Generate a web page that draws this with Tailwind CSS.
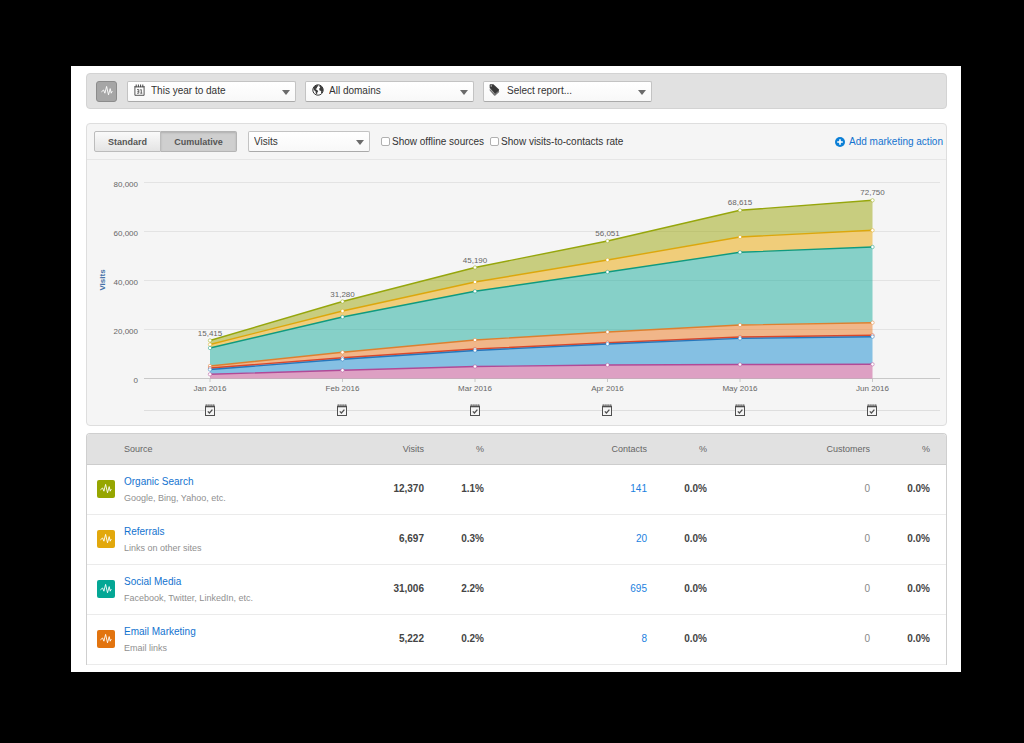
<!DOCTYPE html>
<html lang="en">
<head>
<meta charset="utf-8">
<meta name="viewport" content="width=device-width, initial-scale=1">
<title>Sources report</title>
<script src="https://cdn.jsdelivr.net/npm/@tailwindcss/browser@4"></script>
</head>
<body class="bg-black min-h-screen pt-[66px] pb-[71px] pl-[71px] pr-[63px] font-['Liberation_Sans',Arial,sans-serif] text-[10px] leading-4 text-[#333]">

<svg class="hidden" aria-hidden="true">
  <symbol id="pulse" viewBox="0 0 18 18">
    <path d="M3.7 9.6 5.6 8l1.3 3.2L8.6 4.4l1.9 8.4 1.7-6.2 1 4.6.9-1.8" fill="none" stroke="#fff" stroke-width=".9" stroke-linejoin="round" stroke-linecap="round"/>
  </symbol>
  <symbol id="arrow" viewBox="0 0 8 5"><path d="M0 0h8L4 5z" fill="#6b6b6b"/></symbol>
</svg>

<main class="bg-white px-[15px] pt-[7px] pb-[7px] pr-[14px]">
  <section aria-label="Filters" class="flex items-center rounded border border-[#d3d3d3] bg-[#e1e1e1] h-9 pl-[9px]">
    <button type="button" aria-label="Sources" class="size-[21px] shrink-0 rounded-[3px] border border-[#8c8c8c] bg-[#a6a6a6] flex items-center justify-center">
      <svg class="size-[18px]"><use href="#pulse"/></svg>
    </button>
    <div class="flex gap-[9px] ml-[10px]">
      <div class="relative w-[169px]">
        <select aria-label="Date range" class="appearance-none block w-full h-[21px] pl-[23px] rounded-[2px] border border-[#c3c3c3] border-b-[#aaa] bg-linear-to-b from-white to-[#f8f8f8]"><option>This year to date</option></select>
        <svg class="absolute left-[7px] top-[3px] w-[11px] h-3 pointer-events-none" viewBox="0 0 11 12" fill="none" stroke="#444">
          <path d="M.9 2v9.3h9.2V2" stroke-width=".9"/><path d="M.8 2.9h9.4" stroke-width=".9"/><path d="M2.2.5v2.6M4.4.5v2.6M6.6.5v2.6M8.8.5v2.6" stroke-width="1"/>
          <path d="M3 5.6h1.8v3.6H3M3.4 7.4h1.4M6.2 5.9l1.1-.3v3.6M6.3 9.2h2" stroke-width=".8"/>
        </svg>
        <svg class="absolute right-[6px] top-[9px] w-2 h-[5px] pointer-events-none"><use href="#arrow"/></svg>
      </div>
      <div class="relative w-[169px]">
        <select aria-label="Domain" class="appearance-none block w-full h-[21px] pl-[23px] rounded-[2px] border border-[#c3c3c3] border-b-[#aaa] bg-linear-to-b from-white to-[#f8f8f8]"><option>All domains</option></select>
        <svg class="absolute left-[7px] top-[3px] size-3 pointer-events-none" viewBox="0 0 12 12">
          <circle cx="6" cy="6" r="5.2" fill="#fff" stroke="#3c3c3c" stroke-width="1"/>
          <path d="M1.4 3.4 3.2 1.5l2.6-.6.5 1.3-1.5.8.4 1.1-1.7.9 1.9 1.2.8 1-.9 1.3-.2 1.8-1.3-.7-.3-2.3-1.7-1.4z" fill="#3c3c3c"/>
          <path d="M7.3 1.2 9.6 2.3l1.4 2.2.1 2.3-1.3 2.5-.8-.3.2-2-1.6-.6-.5-1.7 1.2-1.1-.8-.8z" fill="#3c3c3c"/>
        </svg>
        <svg class="absolute right-[6px] top-[9px] w-2 h-[5px] pointer-events-none"><use href="#arrow"/></svg>
      </div>
      <div class="relative w-[169px]">
        <select aria-label="Report" class="appearance-none block w-full h-[21px] pl-[23px] rounded-[2px] border border-[#c3c3c3] border-b-[#aaa] bg-linear-to-b from-white to-[#f8f8f8]"><option>Select report...</option></select>
        <svg class="absolute left-[6px] top-[3px] w-[11px] h-3 pointer-events-none" viewBox="0 0 11 12">
          <path d="M.7 4.8v1.8l4.4 4.8q.7.6 1.3 0L10 8.2q.5-.7 0-1.3L9.2 6 5.6 9.6z" fill="#777"/>
          <path d="M.6.9Q.7.4 1.2.3L4.4.2 9.8 5.2q.6.6 0 1.2L6.6 9.2q-.6.5-1.1 0L.7 4.1z" fill="#383838"/>
          <circle cx="2.2" cy="1.9" r=".6" fill="#fff"/>
        </svg>
        <svg class="absolute right-[6px] top-[9px] w-2 h-[5px] pointer-events-none"><use href="#arrow"/></svg>
      </div>
    </div>
  </section>

  <section aria-label="Visits over time" class="mt-[14px] rounded border border-[#dedede] bg-[#f5f5f5]">
    <div class="flex items-center h-9 pl-[7px] pr-[3px] border-b border-[#e6e6e6]">
      <div class="flex text-[9px] font-bold text-[#555]">
        <button type="button" class="w-[67px] h-[21px] rounded-l-[2px] border border-[#bcbcbc] bg-linear-to-b from-[#fafafa] to-[#e4e4e4]">Standard</button>
        <button type="button" aria-pressed="true" class="w-[76px] h-[21px] rounded-r-[2px] border border-l-0 border-[#b4b4b4] bg-[#cfcfcf] shadow-[inset_0_1px_2px_rgba(0,0,0,0.15)]">Cumulative</button>
      </div>
      <div class="relative w-[122px] ml-[11px]">
        <select aria-label="Metric" class="appearance-none block w-full h-[21px] pl-[5px] rounded-[2px] border border-[#c3c3c3] border-b-[#aaa] bg-linear-to-b from-white to-[#f8f8f8]"><option>Visits</option></select>
        <svg class="absolute right-[6px] top-[9px] w-2 h-[5px] pointer-events-none"><use href="#arrow"/></svg>
      </div>
      <label class="flex items-center gap-[2px] ml-[11px]"><input type="checkbox" class="appearance-none size-[9px] rounded-[2px] border border-[#b0b0b0] bg-white">Show offline sources</label>
      <label class="flex items-center gap-[2px] ml-[6px]"><input type="checkbox" class="appearance-none size-[9px] rounded-[2px] border border-[#b0b0b0] bg-white">Show visits-to-contacts rate</label>
      <a href="#" class="flex items-center gap-1 ml-auto text-[#1373cf]">
        <svg class="size-[10px]" viewBox="0 0 10 10"><circle cx="5" cy="5" r="5" fill="#0b7fd6"/><path d="M5 2.2v5.6M2.2 5h5.6" stroke="#fff" stroke-width="1.6"/></svg>
        Add marketing action
      </a>
    </div>
    <svg id="chart" class="block w-full h-auto" viewBox="0 0 859 265" role="img" aria-label="Cumulative visits by source, January to June 2016"></svg>
  </section>

  <table class="mt-[7px] w-full table-fixed border-separate border-spacing-0 rounded-t border border-b-0 border-[#cfcfcf]">
    <colgroup><col class="w-[37px]"><col class="w-[160px]"><col class="w-[140px]"><col class="w-[60px]"><col class="w-[163px]"><col class="w-[60px]"><col class="w-[163px]"><col class="w-[76px]"></colgroup>
    <thead class="text-[9px] text-[#666] [&_th]:font-normal [&_th]:text-right [&_th]:h-[31px] [&_th]:bg-[#e1e1e1] [&_th]:border-b [&_th]:border-[#cdcdcd]">
      <tr><th scope="col" aria-label="Icon" class="rounded-tl-[3px]"></th><th scope="col" class="!text-left">Source</th><th scope="col">Visits</th><th scope="col">%</th><th scope="col">Contacts</th><th scope="col">%</th><th scope="col">Customers</th><th scope="col" class="pr-4 rounded-tr-[3px]">%</th></tr>
    </thead>
    <tbody class="[&_td]:h-[50px] [&_td]:pb-[2px] [&_td]:border-b [&_td]:border-[#ebebeb] [&_td]:text-right [&_td]:font-bold [&_td]:text-[#444]">
      <tr>
        <td class="pl-[10px]"><svg class="size-[18px] rounded-[2px] bg-[#96a600]"><use href="#pulse"/></svg></td>
        <td class="!text-left !font-normal !pb-0"><a href="#" class="block text-[#1373cf]">Organic Search</a><span class="block text-[9px] text-[#909090]">Google, Bing, Yahoo, etc.</span></td>
        <td>12,370</td><td>1.1%</td><td class="!font-normal"><a href="#" class="text-[#1b7fe0]">141</a></td><td>0.0%</td><td class="!font-normal !text-[#888]">0</td><td class="pr-4">0.0%</td>
      </tr>
      <tr>
        <td class="pl-[10px]"><svg class="size-[18px] rounded-[2px] bg-[#e2a80c]"><use href="#pulse"/></svg></td>
        <td class="!text-left !font-normal !pb-0"><a href="#" class="block text-[#1373cf]">Referrals</a><span class="block text-[9px] text-[#909090]">Links on other sites</span></td>
        <td>6,697</td><td>0.3%</td><td class="!font-normal"><a href="#" class="text-[#1b7fe0]">20</a></td><td>0.0%</td><td class="!font-normal !text-[#888]">0</td><td class="pr-4">0.0%</td>
      </tr>
      <tr>
        <td class="pl-[10px]"><svg class="size-[18px] rounded-[2px] bg-[#04a795]"><use href="#pulse"/></svg></td>
        <td class="!text-left !font-normal !pb-0"><a href="#" class="block text-[#1373cf]">Social Media</a><span class="block text-[9px] text-[#909090]">Facebook, Twitter, LinkedIn, etc.</span></td>
        <td>31,006</td><td>2.2%</td><td class="!font-normal"><a href="#" class="text-[#1b7fe0]">695</a></td><td>0.0%</td><td class="!font-normal !text-[#888]">0</td><td class="pr-4">0.0%</td>
      </tr>
      <tr>
        <td class="pl-[10px]"><svg class="size-[18px] rounded-[2px] bg-[#e2740f]"><use href="#pulse"/></svg></td>
        <td class="!text-left !font-normal !pb-0"><a href="#" class="block text-[#1373cf]">Email Marketing</a><span class="block text-[9px] text-[#909090]">Email links</span></td>
        <td>5,222</td><td>0.2%</td><td class="!font-normal"><a href="#" class="text-[#1b7fe0]">8</a></td><td>0.0%</td><td class="!font-normal !text-[#888]">0</td><td class="pr-4">0.0%</td>
      </tr>
    </tbody>
  </table>
</main>

<script>
// Stacked area chart: each series lists the height of its upper edge, month by month.
const xs = [123, 255.5, 388, 520.5, 653, 785.5];
const months = ['Jan 2016', 'Feb 2016', 'Mar 2016', 'Apr 2016', 'May 2016', 'Jun 2016'];
const totals = ['15,415', '31,280', '45,190', '56,051', '68,615', '72,750'];
const base = 218.5;
const series = [
  { line: '#96a60c', fill: '#9ba50a', y: [180.5, 141.5, 107.5, 81, 50.3, 40.3] },
  { line: '#dca70c', fill: '#eba500', y: [184.5, 151, 122, 100, 77, 70.3] },
  { line: '#0f9a7f', fill: '#17ab9b', y: [188, 157, 131.3, 112, 92.3, 87] },
  { line: '#dd8030', fill: '#ed771d', y: [206, 192.3, 180, 172, 165, 162.7] },
  { line: '#d9472b', fill: '#d9472b', y: [208, 197.8, 189, 182.7, 177, 175.3] },
  { line: '#2577bd', fill: '#158bd1', y: [209.5, 199.3, 190.5, 184, 178.4, 176.7] },
  { line: '#b04a97', fill: '#c54b91', y: [214.3, 210.3, 206.5, 205, 204.5, 204.3] }
];
let out = '';
[[22.5, '80,000'], [71.5, '60,000'], [120.5, '40,000'], [169.5, '20,000'], [218.5, '0']].forEach(([y, t]) => {
  out += `<path d="M57 ${y}H853" stroke="${t === '0' ? '#c8c8c8' : '#e3e3e3'}"/>`;
  out += `<text x="51" y="${y + 4}" text-anchor="end" class="text-[8px] fill-[#666]">${t}</text>`;
});
out += '<path d="M57 250.5H853" stroke="#dedede"/>';
out += '<text transform="translate(18 120) rotate(-90)" text-anchor="middle" class="text-[8px] font-bold fill-[#4572a7]">Visits</text>';
series.forEach((s, i) => {
  const lower = series[i + 1] ? series[i + 1].y : xs.map(() => base);
  const top = xs.map((x, k) => `${x},${s.y[k]}`);
  const bottom = xs.map((x, k) => `${x},${lower[k]}`).reverse();
  out += `<polygon points="${top.concat(bottom).join(' ')}" fill="${s.fill}" fill-opacity=".5"/>`;
});
series.forEach(s => {
  out += `<polyline points="${xs.map((x, k) => `${x},${s.y[k]}`).join(' ')}" fill="none" stroke="${s.line}" stroke-width="1.4"/>`;
});
series.forEach(s => {
  xs.forEach((x, k) => { out += `<circle cx="${x}" cy="${s.y[k]}" r="1.7" fill="#fff" stroke="${s.line}" stroke-width=".5"/>`; });
});
xs.forEach((x, k) => {
  out += `<path d="M${x} 219v3" stroke="#c8c8c8"/>`;
  out += `<text x="${x}" y="${series[0].y[k] - 5}" text-anchor="middle" class="text-[8px] fill-[#666]">${totals[k]}</text>`;
  out += `<text x="${x}" y="231" text-anchor="middle" class="text-[8px] fill-[#666]">${months[k]}</text>`;
  out += `<g transform="translate(${Math.floor(x) - 5} 244)" stroke="#505050" fill="none"><rect x=".5" y="2.5" width="9" height="9" fill="#f5f5f5"/><path d="M0 2.5h10" stroke-width="1.6"/><path d="M1.2 .2v2M3.1 .2v2M5 .2v2M6.9 .2v2M8.8 .2v2" stroke-width=".9"/><path d="M2.8 7.4l1.6 1.6 3-3.4" stroke-width="1.3"/></g>`;
});
document.getElementById('chart').innerHTML = out;
</script>
</body>
</html>
